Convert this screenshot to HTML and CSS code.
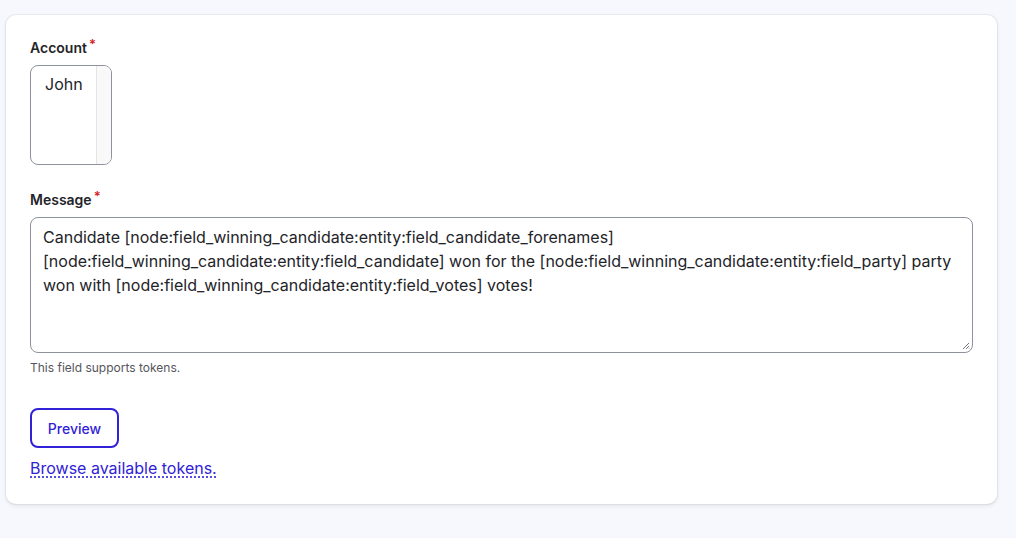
FILE: index.html
```html
<!DOCTYPE html>
<html>
<head>
<meta charset="utf-8">
<link rel="stylesheet" href="styles.css">
</head>
<body>
<div class="card">
  <div class="field">
    <label class="label">Account<span class="req">*</span></label>
    <div class="select">
      <div class="options"><div class="opt">John</div></div>
      <div class="scroll"></div>
    </div>
  </div>
  <div class="field field-msg">
    <label class="label">Message<span class="req">*</span></label>
    <div class="textarea">Candidate [node:field_winning_candidate:entity:field_candidate_forenames]<br>[node:field_winning_candidate:entity:field_candidate] won for the [node:field_winning_candidate:entity:field_party] party<br>won with [node:field_winning_candidate:entity:field_votes] votes!<svg class="grip" width="8" height="8" viewBox="0 0 8 8"><path d="M7 1 L1 7 M7 4 L4 7 M7 6.5 L6.5 7" stroke="#777" stroke-width="1"/></svg></div>
    <div class="desc">This field supports tokens.</div>
  </div>
  <button class="btn">Preview</button>
  <a class="link" href="#">Browse available tokens.</a>
</div>
</body>
</html>
```

FILE: styles.css
```css
html, body { margin: 0; padding: 0; }
body {
  background: #f7f8fd;
  font-family: Inter, "Noto Sans", sans-serif;
  color: #222330;
  padding: 15px 19px 34px 6px;
  box-sizing: border-box;
  width: 1016px;
  height: 538px;
}
.card {
  background: #fff;
  border-radius: 10px;
  box-shadow: 0 2px 4px rgba(0,0,0,0.08), 0 0 0 1px rgba(220,222,232,0.5);
  padding: 24px 24px 24px 24px;
  height: 489px;
  box-sizing: border-box;
  display: flex;
  flex-direction: column;
  align-items: flex-start;
}
.field { display: flex; flex-direction: column; align-items: flex-start; width: 100%; }
.label {
  font-size: 14px;
  font-weight: 600;
  line-height: 18px;
  margin-bottom: 8px;
  color: #232429;
}
.req {
  color: #d72222;
  font-size: 13px;
  margin-left: 2px;
  position: relative;
  top: -4px;
}
.select {
  width: 82px;
  height: 100px;
  box-sizing: border-box;
  border: 1px solid #8e929c;
  border-radius: 8px;
  display: flex;
  overflow: hidden;
}
.options { flex: 1; padding: 8px 0 0 14px; }
.opt { font-size: 16px; line-height: 20px; color: #232429; }
.scroll {
  width: 14px;
  background: #f9f9f9;
  border-left: 1px solid #e4e4e4;
}
.field-msg { margin-top: 26px; }
.textarea {
  position: relative;
  width: 943px;
  height: 136px;
  box-sizing: border-box;
  border: 1px solid #8e929c;
  border-radius: 8px;
  padding: 7px 12px;
  font-size: 16px;
  line-height: 24px;
  color: #232429;
}
.grip { position: absolute; right: 2px; bottom: 2px; }
.desc {
  font-size: 12px;
  color: #55565b;
  margin-top: 7px;
  line-height: 16px;
}
.btn {
  margin-top: 32px;
  width: 89px;
  height: 40px;
  border: 2px solid #3122d7;
  border-radius: 8px;
  background: #fff;
  color: #3122d7;
  font-family: Inter, "Noto Sans", sans-serif;
  font-size: 14px;
  font-weight: 500;
  padding: 0;
}
.link {
  margin-top: 10px;
  font-size: 16px;
  line-height: 20px;
  color: #3122d7;
  text-decoration: underline dotted;
  text-underline-offset: 3px;
}
```
